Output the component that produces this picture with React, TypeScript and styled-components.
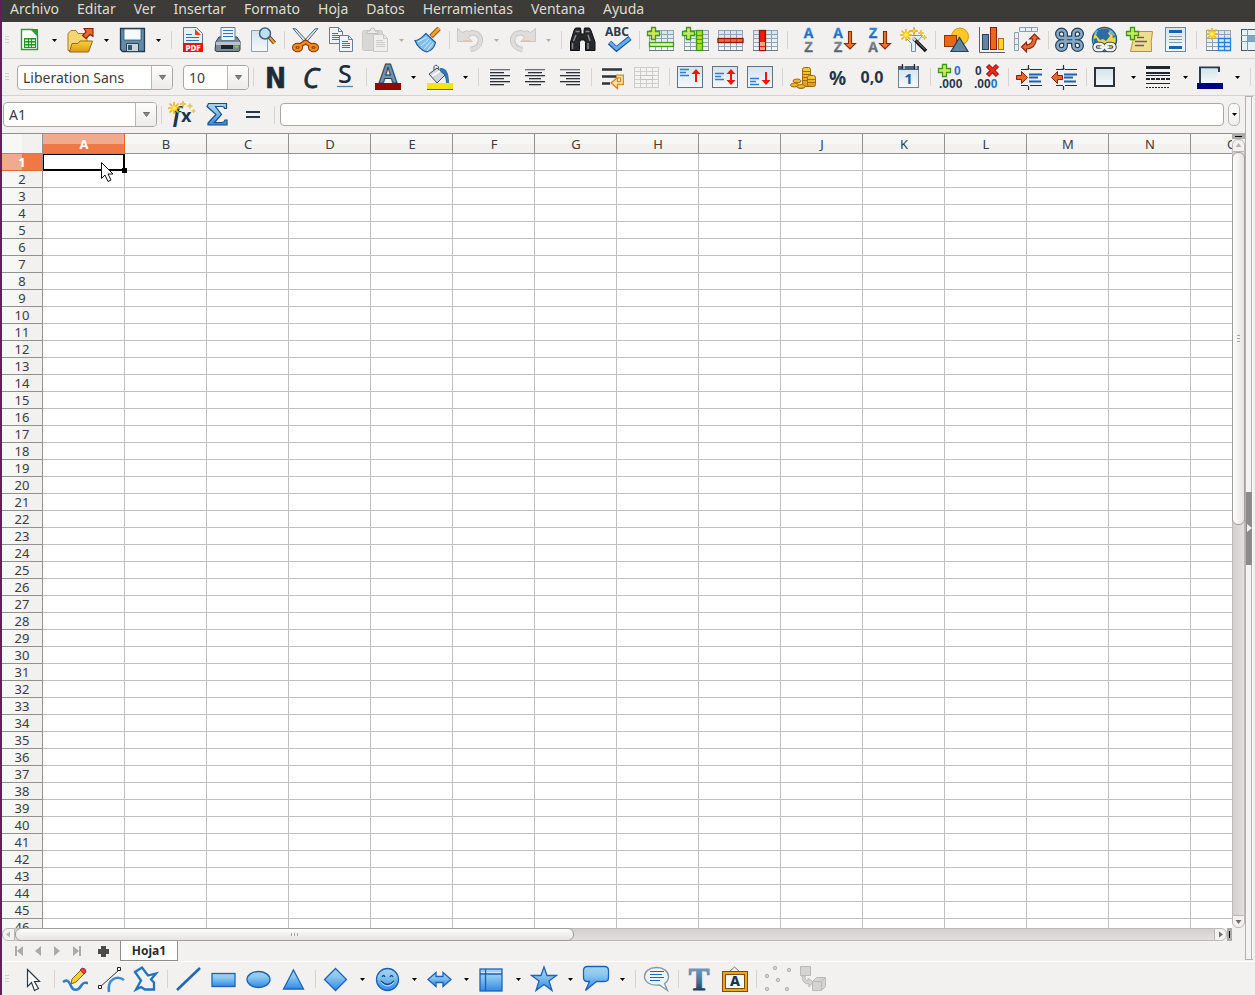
import React, { useEffect, useState } from "react";
import styled, { createGlobalStyle } from "styled-components";

const ui = '"Noto Sans", "Open Sans", sans-serif';
const chrome = "#f2f1f0";
const line = "#d6d4d2";
const ink = "#3c3c3c";

const GlobalStyle = createGlobalStyle`
  *, *::before, *::after { box-sizing: border-box; }
  body { margin: 0; background: ${chrome}; font-family: ${ui}; color: ${ink}; }
  button, input, select { font-family: inherit; color: inherit; margin: 0; }
`;

const Window = styled.div`
  display: flex;
  flex-direction: column;
  height: 100vh;
  overflow: hidden;
  border-left: 2px solid #6b1a5a;
  background: ${chrome};
`;

const MenuBar = styled.nav`
  flex: none;
  display: flex;
  gap: 18px;
  height: 22px;
  padding-left: 8px;
  background: #3c3b37;
`;

const MenuItem = styled.button`
  border: 0;
  padding: 0;
  height: 18px;
  background: none;
  color: #dfdbd2;
  font-size: 14px;
  line-height: 18px;
  white-space: nowrap;
`;

const Toolbar = styled.div<{ $last?: boolean }>`
  flex: none;
  display: flex;
  align-items: ${(p) => (p.$last ? "flex-start" : "flex-end")};
  height: ${(p) => (p.$last ? 34 : 37)}px;
  border-bottom: ${(p) => (p.$last ? "0" : `1px solid ${line}`)};
  border-top: ${(p) => (p.$last ? "1px solid #ffffff" : "0")};
`;

const Grip = styled.span<{ $wide?: number }>`
  flex: none;
  align-self: center;
  width: ${(p) => p.$wide ?? 9}px;
  height: 8px;
  padding-left: 3px;
  background: repeating-linear-gradient(#d0cecc 0 1px, transparent 1px 3px) content-box;
  border-right: ${(p) => (p.$wide ?? 9) - 7}px solid transparent;
`;

const ToolButton = styled.button`
  flex: none;
  display: flex;
  align-items: center;
  justify-content: center;
  width: 35px;
  height: 35px;
  padding: 0;
  border: 0;
  background: none;
`;

const DropButton = styled(ToolButton)`
  width: 17px;
`;

const Separator = styled.span`
  flex: none;
  align-self: center;
  width: 8px;
  height: 18px;
  border-right: 3px solid transparent;
  border-left: 4px solid transparent;
  background: ${line};
  background-clip: padding-box;
`;

const Glyph = styled.svg`
  flex: none;
  display: block;
  overflow: visible;
  font-family: ${ui};
`;

const Combo = styled.div<{ $width: number; $gap?: number }>`
  flex: none;
  align-self: center;
  display: grid;
  grid-template-columns: 1fr;
  width: ${(p) => p.$width}px;
  height: 25px;
  margin-right: ${(p) => p.$gap ?? 0}px;
  border: 1px solid #aaa6a2;
  border-radius: 4px;
  background: #fff;
  overflow: hidden;
`;

const ComboSelect = styled.select`
  grid-area: 1 / 1;
  appearance: none;
  border: 0;
  padding: 0 24px 0 5px;
  background: none;
  outline: 0;
  font-size: 14px;
`;

const ComboInput = styled.input`
  grid-area: 1 / 1;
  min-width: 0;
  border: 0;
  padding: 0 24px 0 5px;
  background: none;
  outline: 0;
  font-size: 14px;
`;

const ComboArrow = styled.span`
  grid-area: 1 / 1;
  justify-self: end;
  display: flex;
  align-items: center;
  justify-content: center;
  width: 21px;
  border-left: 1px solid #bcb8b4;
  background: linear-gradient(#fdfdfd, #ecebe9);
  pointer-events: none;
`;

const ComboButton = styled.button`
  grid-area: 1 / 1;
  justify-self: end;
  display: flex;
  align-items: center;
  justify-content: center;
  width: 21px;
  padding: 0;
  border: 0;
  border-left: 1px solid #bcb8b4;
  background: linear-gradient(#fdfdfd, #ecebe9);
`;

const Workspace = styled.main`
  flex: 1;
  min-height: 0;
  display: flex;
`;

const Document = styled.section`
  flex: 1;
  min-width: 0;
  display: flex;
  flex-direction: column;
`;

const FormulaBar = styled.div`
  flex: none;
  display: flex;
  align-items: center;
  height: 37px;
  padding: 0 5px 0 1px;
`;

const FormulaInput = styled.input`
  flex: 1;
  min-width: 0;
  height: 23px;
  margin: 0 4px 0 2px;
  padding: 0 5px;
  border: 1px solid #aaa6a2;
  border-radius: 4px;
  outline: 0;
  background: #fff;
  font-size: 14px;
`;

const ExpandButton = styled.button`
  flex: none;
  display: flex;
  align-items: center;
  justify-content: center;
  width: 12px;
  height: 23px;
  padding: 0;
  border: 1px solid #b9b5b1;
  border-radius: 5px;
  background: linear-gradient(#fff, #efeeec);
`;

const GridRow = styled.div`
  flex: 1;
  min-height: 0;
  display: flex;
`;

const GridView = styled.div`
  position: relative;
  flex: 1;
  min-width: 0;
  overflow: hidden;
  background: #fff;
`;

const Sheet = styled.table`
  width: max-content;
  table-layout: fixed;
  border-collapse: separate;
  border-spacing: 0;
  font-size: 13px;
`;

const Corner = styled.td`
  width: 41px;
  height: 21px;
  padding: 0;
  border: solid #929190;
  border-width: 1px 1px 1px 0;
  background: linear-gradient(90deg, #f7f7f6 50%, #f2f1f0 50%);
`;

const ColumnHead = styled.th<{ $on: boolean }>`
  width: 82px;
  height: 21px;
  padding: 1px 0 0 1px;
  border: solid #929190;
  border-width: 1px 1px 1px 0;
  border-right-color: ${(p) => (p.$on ? "#dd6a2f" : "#929190")};
  background: ${(p) =>
    p.$on
      ? "linear-gradient(#f0aa8c 50%, #f07746 50%)"
      : "linear-gradient(#f7f7f6 50%, #f2f1f0 50%)"};
  color: ${(p) => (p.$on ? "#fff" : ink)};
  font-weight: ${(p) => (p.$on ? 700 : 400)};
  line-height: 18px;
`;

const RowHead = styled.th<{ $on: boolean }>`
  width: 41px;
  height: 17px;
  padding: 1px 0 0;
  border: solid #929190;
  border-width: 0 1px 1px 0;
  border-bottom-color: ${(p) => (p.$on ? "#dd6a2f" : "#929190")};
  background: ${(p) =>
    p.$on
      ? "linear-gradient(90deg, #f0aa8c 50%, #f07746 50%)"
      : "linear-gradient(90deg, #f7f7f6 50%, #f2f1f0 50%)"};
  color: ${(p) => (p.$on ? "#fff" : ink)};
  font-weight: ${(p) => (p.$on ? 700 : 400)};
  line-height: 15px;
`;

const Cell = styled.td`
  position: relative;
  width: 82px;
  height: 17px;
  padding: 0;
  border: solid #c0c0c0;
  border-width: 0 1px 1px 0;
`;

const ActiveFrame = styled.span`
  position: absolute;
  z-index: 1;
  inset: 0 -1px -1px 0;
  border: 2px solid #000;
  border-width: 1px 2px 2px 1px;

  &::after {
    content: "";
    position: absolute;
    right: -4px;
    bottom: -4px;
    width: 5px;
    height: 5px;
    background: #000;
  }
`;

const Pointer = styled.svg`
  position: absolute;
  z-index: 2;
  left: 98px;
  top: 28px;
`;

const VScroll = styled.div`
  flex: none;
  display: flex;
  flex-direction: column;
  width: 13px;
`;

const HScroll = styled.div`
  flex: none;
  display: flex;
  height: 13px;
  margin-right: 13px;
`;

const SplitHandle = styled.span<{ $axis: "x" | "y" }>`
  flex: none;
  display: flex;
  align-items: center;
  justify-content: center;
  width: ${(p) => (p.$axis === "x" ? 5 : 13)}px;
  height: ${(p) => (p.$axis === "x" ? 13 : 6)}px;
  background: #adabaa;

  &::after {
    content: "";
    width: ${(p) => (p.$axis === "x" ? 1 : 7)}px;
    height: ${(p) => (p.$axis === "x" ? 7 : 1)}px;
    background: #000;
  }
`;

const ScrollButton = styled.button<{ $radius: string }>`
  flex: none;
  display: flex;
  align-items: center;
  justify-content: center;
  width: 13px;
  height: 13px;
  padding: 0;
  border: 1px solid #bab7b3;
  border-radius: ${(p) => p.$radius};
  background: #f3f2f1;
`;

const Track = styled.div<{ $axis: "x" | "y" }>`
  flex: 1;
  min-width: 0;
  min-height: 0;
  display: flex;
  flex-direction: ${(p) => (p.$axis === "x" ? "row" : "column")};
  border: solid #bdbab7;
  border-width: ${(p) => (p.$axis === "x" ? "1px 0" : "0 1px")};
  background: linear-gradient(${(p) => (p.$axis === "x" ? "180deg" : "90deg")}, #d3d1cf, #e2e0de);

  &::after {
    content: "";
    flex: 100 0 0;
  }
`;

const Thumb = styled.div<{ $axis: "x" | "y" }>`
  flex: ${(p) => (p.$axis === "x" ? 87 : 95)} 0 0;
  display: flex;
  align-items: center;
  justify-content: center;
  margin: ${(p) => (p.$axis === "x" ? "-1px 0" : "0 -1px")};
  border: 1px solid #a19d98;
  border-radius: 6px;
  background: linear-gradient(${(p) => (p.$axis === "x" ? "180deg" : "90deg")}, #fdfdfd, #e6e4e2);
`;

const Notches = styled.span<{ $axis: "x" | "y" }>`
  width: ${(p) => (p.$axis === "x" ? 7 : 3)}px;
  height: ${(p) => (p.$axis === "x" ? 3 : 7)}px;
  background: repeating-linear-gradient(
    ${(p) => (p.$axis === "x" ? "90deg" : "180deg")},
    #a8a5a2 0 1px,
    transparent 1px 3px
  );
`;

const TabBar = styled.div`
  flex: none;
  display: flex;
  align-items: flex-start;
  height: 20px;
  padding-left: 8px;
`;

const TabNav = styled.button<{ $wide?: boolean }>`
  flex: none;
  display: flex;
  align-items: center;
  justify-content: center;
  width: ${(p) => (p.$wide ? 34 : 19)}px;
  height: 20px;
  padding: 0;
  border: 0;
  background: none;
`;

const SheetTab = styled.button`
  width: 58px;
  height: 20px;
  padding: 0;
  border: 1px solid #8f8d8b;
  border-top: 0;
  background: #fff;
  color: #2c2c2c;
  font-size: 12px;
  font-weight: 700;
  line-height: 18px;
`;

const SideDeck = styled.aside`
  flex: none;
  display: flex;
  align-items: center;
  width: 8px;
  margin: 0 2px 1px 0;
  border: 1px solid #b3b1af;
  border-right: 0;
  background: linear-gradient(90deg, #f4f3f2 5px, #b3b1af 5px 6px, #fafafa 6px);
`;

const DeckHandle = styled.button`
  display: flex;
  align-items: center;
  width: 6px;
  height: 73px;
  padding: 0;
  border: 0;
  background: #8d8b89;
`;

/* ---------- drawings ---------- */

const Defs = () => (
  <svg width="0" height="0" style={{ position: "absolute" }} aria-hidden="true">
    <defs>
      <linearGradient id="sky" x1="0" y1="0" x2="0" y2="1">
        <stop offset="0" stopColor="#a3d3ec" />
        <stop offset=".35" stopColor="#8cc8ee" />
        <stop offset="1" stopColor="#3288e6" />
      </linearGradient>
      <linearGradient id="letter" x1="0" y1="0" x2="0" y2="1">
        <stop offset="0" stopColor="#2f95ee" />
        <stop offset="1" stopColor="#1b57a6" />
      </linearGradient>
      <linearGradient id="stone" x1="0" y1="0" x2="0" y2="1">
        <stop offset="0" stopColor="#8b9096" />
        <stop offset="1" stopColor="#4d555e" />
      </linearGradient>
      <linearGradient id="paper" x1="0" y1="0" x2="0" y2="1">
        <stop offset="0" stopColor="#d4e4ec" />
        <stop offset="1" stopColor="#f6f8fa" />
      </linearGradient>
      <linearGradient id="gold" x1="0" y1="0" x2="0" y2="1">
        <stop offset="0" stopColor="#f6d13c" />
        <stop offset="1" stopColor="#dd9a17" />
      </linearGradient>
      <linearGradient id="steel" x1="0" y1="0" x2="0" y2="1">
        <stop offset=".2" stopColor="#6f9aba" />
        <stop offset=".6" stopColor="#3f6a92" />
        <stop offset=".8" stopColor="#22405e" />
      </linearGradient>
    </defs>
  </svg>
);

const Plus = () => (
  <path d="M4.500 .5h4v4h4v4h-4v4h-4v-4h-4v-4h4z" fill="#cfe860" stroke="#3f9a16" strokeWidth="1.300" />
);

const Grid = ({ x, faint }: { x: number; faint?: boolean }) => (
  <g transform={`translate(${x} 3)`} stroke={faint ? "#cfcdcb" : "#8fa5b5"}>
    <rect x=".5" y=".5" width="24" height="20" fill={faint ? "#f4f3f2" : "url(#paper)"} />
    <path fill="none" d="M6.500 .5v20M12.500 .5v20M18.500 .5v20M.5 4.500h24M.5 8.500h24M.5 12.500h24M.5 16.500h24" />
    <path d="M0 20.500h25" stroke={faint ? "#cfcdcb" : "#68798a"} />
  </g>
);

const Star = ({ x, y, r }: { x: number; y: number; r: number }) => (
  <path
    transform={`translate(${x} ${y}) scale(${r / 6})`}
    d="M0-6 1.200-1.200 6 0 1.200 1.200 0 6-1.200 1.200-6 0-1.200-1.200z"
    fill="#ffd83a"
    stroke="#e0a312"
    strokeWidth="1.200"
  />
);

const Sun = ({ x, y }: { x: number; y: number }) => (
  <g transform={`translate(${x} ${y})`} stroke="#eeb211" strokeWidth="1.600">
    <path d="M0-6V6M-6 0H6M-4.500-4.500 4.500 4.500M4.500-4.500-4.500 4.500" />
    <circle r="2.500" fill="#fff07a" stroke="#ffd21f" />
  </g>
);

const Doc = ({ x, y, w, h, faint }: { x: number; y: number; w: number; h: number; faint?: boolean }) => (
  <g transform={`translate(${x} ${y})`} stroke={faint ? "#cbc9c7" : "#5f8199"} fill="none">
    <path d={`M.5 .5h${w - 5}l4 4v${h - 5}h-${w - 1}z`} fill={faint ? "#efeeed" : "#eef4f8"} />
    <path d={`M${w - 4.5} .5v4h4`} />
    <path
      stroke={faint ? "#cfcdcb" : "#2f77bd"}
      d={`M3 6.500h${w - 8}M3 8.500h${w - 6}M3 10.500h${w - 6}M3 12.500h${w - 6}`}
    />
  </g>
);

const Letters = ({ top, bottom, x }: { top: string; bottom: string; x: number }) => (
  <g fontSize="14" fontWeight="800" textAnchor="middle" fontFamily='"Liberation Sans", sans-serif'>
    <text x={x} y="11" fill="url(#letter)" stroke="url(#letter)" strokeWidth=".4">{top}</text>
    <text x={x} y="25" fill="url(#stone)" stroke="url(#stone)" strokeWidth=".4">{bottom}</text>
  </g>
);

const DownArrow = () => (
  <path d="M18.500 4.500h3v12h4L20 22l-5.500-5.500h4z" fill="#e37a2a" stroke="#8c2708" strokeWidth="1.100" />
);

const VAlign = ({ y, d }: { y: number; d: string }) => (
  <>
    <rect x=".5" y="2.500" width="25" height="21" fill="url(#paper)" stroke="#5f7385" />
    <path d={`M3 ${y + 0.5}h9M3 ${y + 3.5}h6M3 ${y + 6.5}h9`} stroke="#2a7fd4" strokeWidth="1.300" />
    <path d={d} fill="#f0150c" />
  </>
);

const Align = ({ rows }: { rows: number[][] }) => (
  <>
    {rows.map(([x, w], i) => (
      <rect key={i} x={x} y={5 + i * 3} width={w} height="1.300" fill={i < 1 ? "#6b6f77" : "#2b323b"} />
    ))}
  </>
);

const IndentLines = () => (
  <>
    <path d="M5 5.500h7l1.500-1M14 5.500h12M5 21.500h7M14 21.500h12M12.500 1v4M12.500 22v4" stroke="#26323e" strokeWidth="1.200" />
    <path d="M13 10.500h13M13 13.500h9M13 17.500h12" stroke="#1d62ad" strokeWidth="2" />
  </>
);

const red = { fill: "#e26a33", stroke: "#8a2108", strokeWidth: 1.1 };
const outline = { fill: "url(#sky)", stroke: "#1c64b8", strokeWidth: 1.3 };
const tight = '"Liberation Sans", sans-serif';

const art: Record<string, React.ReactNode> = {
  nuevo: (
    <>
      <path d="M6.500 2.500h11l5 6v14h-16z" fill="#fff" stroke="#2f9a30" strokeWidth="1.400" />
      <path d="M15 2h8v8z" fill="#25a22a" />
      <path d="M9 11h12v10H9z" fill="#23962a" />
      <path d="M10 12.500h3v1.500h-3zM14 12.500h2v1.500h-2zM17 12.500h3v1.500h-3zM10 15.500h3v1.500h-3zM14 15.500h2v1.500h-2zM17 15.500h3v1.500h-3zM10 18.500h3v1.500h-3zM14 18.500h2v1.500h-2zM17 18.500h3v1.500h-3z" fill="#d6f3c8" />
    </>
  ),
  abrir: (
    <>
      <path d="M1 23.500V6.500l3-3h5l2 3h9v17z" fill="#f4d774" stroke="#a67a24" />
      <path d="M2.500 25 5 16.500h6l2-2.500h12.500L21.500 25z" fill="url(#gold)" stroke="#9a6914" />
      <path d="M15.500 8.500 19 5l-2-3.500h9v8l-3-2-4 4z" {...red} />
    </>
  ),
  guardar: (
    <>
      <path d="M1.500 1.500h24v23h-22l-2-2z" fill="#6189a8" stroke="#223a4d" strokeWidth="1.300" />
      <path d="M5 2h17v11H5z" fill="#f7fafc" stroke="#36566f" strokeWidth=".8" />
      <path d="M7.500 16.500h12v8h-12z" fill="#c9d3d9" stroke="#2c4456" />
      <path d="M9 18h4v5H9z" fill="#35526a" />
    </>
  ),
  pdf: (
    <>
      <path d="M4.500 .5h13l6 6v18h-19z" fill="#e6eff5" stroke="#587a93" />
      <path d="M16 2v6h6z" fill="#f13a24" />
      <path d="M7 7.500h6M7 10.500h13M7 13.500h13" stroke="#2b74bb" />
      <path d="M4 16h20v9H4z" fill="#ee1108" />
      <text x="14" y="23.500" fontSize="8" fontWeight="800" textAnchor="middle" fill="#fff">PDF</text>
    </>
  ),
  imprimir: (
    <>
      <path d="M2 14.500 5 10h18l3 4.500v8q0 2-2 2H3q-2 0-2-2z" fill="#7d8b97" stroke="#2e3b46" />
      <path d="M7 .5h14v13H7z" fill="#eef5fa" stroke="#5c7f9a" />
      <path d="M9 3.500h10M9 6.500h10M9 9.500h10" stroke="#2b74bb" />
      <path d="M2 15h24v3H2z" fill="#b9c3cb" />
      <path d="M7 18h12v4H7z" fill="#1d242a" />
      <path d="M21 19h3v1.500h-3z" fill="#74e04a" />
    </>
  ),
  vista: (
    <>
      <path d="M2.500 3.500h16v21h-16z" fill="url(#paper)" stroke="#8ba1b1" />
      <path d="m20 10 5.500 6" stroke="#5c3a10" strokeWidth="4" />
      <path d="m20.500 10.500 5 5.500" stroke="#e9a52c" strokeWidth="2" />
      <circle cx="16" cy="6.500" r="5.500" fill="#bfe0f4" stroke="#3e6585" strokeWidth="1.500" />
    </>
  ),
  cortar: (
    <>
      <path d="M1 1.500 4 2l13 14-2 2zM26 1.500 23 2 10 16l2 2z" fill="#dde6ec" stroke="#4c6478" />
      <g fill="none" stroke="#8a3206" strokeWidth="4.500">
        <ellipse cx="5.500" cy="20.500" rx="3.300" ry="2.500" />
        <ellipse cx="21.500" cy="20.500" rx="3.300" ry="2.500" />
        <path d="m8 18.500 5.500-3.500L19 18.500" />
      </g>
      <g fill="none" stroke="#f08a1c" strokeWidth="2.600">
        <ellipse cx="5.500" cy="20.500" rx="3.300" ry="2.500" />
        <ellipse cx="21.500" cy="20.500" rx="3.300" ry="2.500" />
        <path d="m8 18.500 5.500-3.500L19 18.500" />
      </g>
    </>
  ),
  copiar: (
    <>
      <Doc x={2} y={0} w={14} h={17} />
      <Doc x={12} y={8} w={14} h={17} />
    </>
  ),
  pegar: (
    <>
      <rect x=".5" y="3.500" width="20" height="20" rx="2" fill="#d9d7d6" stroke="#cbc9c7" />
      <path d="M5 6.500V4h3q0-3 2.500-3T13 4h3v2.500z" fill="#eceae9" stroke="#bfbdbb" />
      <Doc x={11} y={7} w={15} h={18} faint />
    </>
  ),
  pincel: (
    <>
      <path d="m25 1.500-8 8" stroke="#8a5a12" strokeWidth="5" />
      <path d="m25.500 1-8 8" stroke="#f2a42e" strokeWidth="3" />
      <path d="M1 13.500C6 13.500 8 10 12 6.500l9.500 9c-1 5-5 8.500-9 9.500C8 24 3 19 1 13.500z" fill="#7fbdec" stroke="#1d5c9c" strokeWidth="1.200" />
      <path d="m4 15 9-5M7 19l8-7M10 22l7-8M13 24l6-8" stroke="#d6edfb" />
    </>
  ),
  deshacer: (
    <>
      <path d="M8 10.500Q13 5 17 6C26 7.500 26 20.500 13.500 22.500" fill="none" stroke="#c9c7c5" strokeWidth="5.500" />
      <path d="M.5 1.500v13h15l-5-4.500 3-4-4-2.500-4 2z" fill="#dedddc" stroke="#c9c7c5" />
      <path d="M9 9.500Q13 5 17 6C26 7.500 26 20.500 14 22.500" fill="none" stroke="#dedddc" strokeWidth="3.500" />
      <path d="M6 13.500h7" stroke="#f3c49c" />
    </>
  ),
  buscar: (
    <>
      <path d="M5 3.500 6.500 1h5L12 4v3h3V4l.5-3h5L22 3.500 26 15v8.500h-9.500v-8l-1-2.500h-4l-1 2.500v8H1.500V15z" fill="#26282b" stroke="#0d0e10" />
      <path d="M6.500 4.500h4M16.500 4.500h4M7 8 4.500 14M19 8l2 6M3.500 16v6M19 16v6" stroke="#85898e" strokeWidth="1.500" />
    </>
  ),
  ortografia: (
    <>
      <text x="13" y="9" fontSize="12" fontWeight="700" textAnchor="middle" fill="#2d3e50">ABC</text>
      <path d="m5.500 15.500 7 6.500L26 11" fill="none" stroke="#1b4f92" strokeWidth="5" />
      <path d="m6 15.500 6.500 6L25.500 11.500" fill="none" stroke="#5fb0f2" strokeWidth="3" />
    </>
  ),
  filaMas: (
    <>
      <Grid x={2} />
      <rect x="2.500" y="15.500" width="24" height="4" fill="#dcefc0" stroke="#3f9a16" strokeWidth="1.300" />
      <Plus />
    </>
  ),
  colMas: (
    <>
      <Grid x={2} />
      <rect x="14.500" y="3.500" width="6" height="20" fill="#a6e02c" stroke="#3f9a16" strokeWidth="1.300" />
      <path d="M15 8.500h5M15 12.500h5M15 16.500h5" stroke="#3f9a16" />
      <Plus />
    </>
  ),
  filaMenos: (
    <>
      <Grid x={1} />
      <rect x="1" y="11.500" width="25" height="4" fill="#ef6a3a" stroke="#991406" strokeWidth="1.300" />
      <path d="M7.500 12v3M13.500 12v3M19.500 12v3" stroke="#c23a1a" />
    </>
  ),
  colMenos: (
    <>
      <Grid x={1} />
      <rect x="7.500" y="3.500" width="6" height="20" fill="#ee1b10" stroke="#991406" strokeWidth="1.300" />
      <path d="M8 15h5v4H8zM8 20h5v3H8z" fill="#f3a385" />
    </>
  ),
  ordenar: <Letters top="A" bottom="Z" x={13.5} />,
  ascendente: (
    <>
      <Letters top="A" bottom="Z" x={8} />
      <DownArrow />
    </>
  ),
  descendente: (
    <>
      <Letters top="Z" bottom="A" x={8} />
      <DownArrow />
    </>
  ),
  filtro: (
    <>
      <path d="M3.500 8.500h19l-7 8v8h-4v-8z" fill="#e4eff6" stroke="#7892a5" />
      <path d="m13.500 11.500 12.500 12.500" stroke="#14181c" strokeWidth="3.500" />
      <path d="m12.500 10.500 3 3" stroke="#c9ced2" strokeWidth="2.500" />
      <path d="m16 13.500 9 9" stroke="#7d848a" />
      <Sun x={6} y={8} />
      <Star x={14} y={4} r={4} />
      <Star x={21} y={6} r={3} />
      <Star x={24.500} y={10.500} r={2.5} />
    </>
  ),
  formas: (
    <>
      <circle cx="17" cy="9.500" r="8.500" fill="#fbc925" stroke="#d89210" />
      <rect x="1.500" y="8.500" width="12" height="11" fill="#e8691c" stroke="#8f3606" />
      <path d="m16.500 10.500 8.500 14H8z" fill="#63869f" stroke="#24415a" strokeWidth="1.200" />
    </>
  ),
  grafico: (
    <>
      <path d="M1.500 0v25.500H27" fill="none" stroke="#5c6268" />
      <rect x="4.500" y="7.500" width="6" height="15" fill="#5f86a4" stroke="#243f56" />
      <rect x="12.500" y=".5" width="6" height="22" fill="#e8691c" stroke="#8f1a06" />
      <rect x="20.500" y="11.500" width="5" height="11" fill="#fbd525" stroke="#b36f0a" />
    </>
  ),
  dinamica: (
    <>
      <path d="M1.500 5.500h4v18h-4zM1.500 11.500h4M1.500 17.500h4M6.500 .5h18v4h-18zM12.500 .5v4M18.500 .5v4" fill="#e8f0f5" stroke="#8aa0b0" />
      <path d="M8.500 20 13.500 15v3q6-1 6-6h-3l5-5 5 5h-3q-1 9.500-10 10v3z" {...red} />
    </>
  ),
  comando: (
    <g fill="none">
      {[["#243f58", 5], ["#87a9c6", 2.6]].map(([c, w]) => (
        <path key={c} stroke={c as string} strokeWidth={w as number}
          d="M17.500 7v11.500a4 4 0 1 0 4-4H5.500a4 4 0 1 0 4 4V7a4 4 0 1 0-4 4h16a4 4 0 1 0-4-4z" />
      ))}
    </g>
  ),
  enlace: (
    <>
      <circle cx="13.500" cy="12.500" r="12" fill="#f0d640" stroke="#1d5a8c" strokeWidth="1.500" />
      <path d="M7 3q7-3 13 0l-3 3 2 3-4 5-3-2-3 1-4-5zM22 6l2.500 4-3 1zM2.500 12l3-1 2 5-4 1z" fill="#2c6ca8" />
      <path d="M3 6q2-3 4-3l-2 5zM18 3q5 2 6 6l-5-2z" fill="#5fb4ea" />
      <g fill="none" stroke="#3c4852" strokeWidth="4.500">
        <rect x="3.500" y="17" width="9" height="6" rx="3" />
        <rect x="14.500" y="17" width="9" height="6" rx="3" />
      </g>
      <g fill="none" stroke="#eef2f5" strokeWidth="2.500">
        <rect x="3.500" y="17" width="9" height="6" rx="3" />
        <rect x="14.500" y="17" width="9" height="6" rx="3" />
        <path d="M9 20h9" />
      </g>
    </>
  ),
  nota: (
    <>
      <path d="M7.500 4.500h19q-2 10-1 20H4.500q3-10 3-20z" fill="#f0dd8e" stroke="#b39532" />
      <path d="M11 10.500h7M9 14.500h12M9 18.500h9" stroke="#5b6570" strokeWidth="1.300" />
      <Plus />
    </>
  ),
  encabezado: (
    <>
      <rect x="4.500" y=".5" width="20" height="24" fill="url(#paper)" stroke="#6e8799" />
      <path d="M8 3h13v3H8zM8 19h13v3H8z" fill="#1b62b3" />
      <path d="M8 9.500h13M8 12.500h13M8 15.500h13" stroke="#8a99a5" />
    </>
  ),
  inmovilizar: (
    <>
      <Grid x={2} />
      <path d="M14.500 11.500h12v12h-12zM14.500 15.500h12M14.500 19.500h12M20.500 11.500v12" fill="#dcebf8" stroke="#2e7fd8" strokeWidth="1.300" />
      <Sun x={8} y={7} />
    </>
  ),
  dividir: (
    <>
      <rect x="2.500" y="2.500" width="24" height="21" fill="#e6f3f6" stroke="#4d565e" />
      <path d="M8.500 2v22M2 8.500h25M2 14.500h25" stroke="#7f9aab" />
      <path d="M9 9h18v5H9z" fill="#7fa6c9" />
    </>
  ),
  negrita: (
    <text x="14.500" y="24" fontSize="28" fontWeight="700" textAnchor="middle" fill="#1f2a38" stroke="#1f2a38"
      strokeWidth=".5" fontFamily='"Liberation Sans Narrow", "DejaVu Sans Condensed", sans-serif'>N</text>
  ),
  cursiva: (
    <text x="15" y="24" fontSize="28" fontStyle="italic" textAnchor="middle" fill="#1f2a38" stroke="#1f2a38"
      strokeWidth=".8" fontFamily='"Open Sans", sans-serif'>C</text>
  ),
  subrayado: (
    <>
      <text x="14" y="19" fontSize="25" fontWeight="500" textAnchor="middle" fill="#1f2a38">S</text>
      <path d="M6 22.500h16" stroke="#5b86a8" strokeWidth="1.300" />
    </>
  ),
  colorTexto: (
    <>
      <text x="14" y="19" fontSize="26" fontWeight="700" textAnchor="middle" fill="#6f93b1" stroke="#243c55">A</text>
      <path d="M1 19h26v7H1z" fill="#8f0b02" />
    </>
  ),
  relleno: (
    <>
      <path d="M14 4q9-1 9 15h-3q0-9-6-9z" fill="#2f78b8" />
      <path d="m3 10 8-6 8 7-8 8z" fill="#cdd7de" stroke="#3c4d5a" />
      <path d="M8 6V2.500Q9 .5 11 1.500t2 4" fill="none" stroke="#3c4d5a" />
      <path d="m6 12 8-5" stroke="#fff" strokeWidth="2" />
      <path d="M1 19h26v7H1z" fill="#fbe214" />
      <path d="M1 25.500h26" stroke="#d92a10" />
    </>
  ),
  izquierda: <Align rows={[[4, 20], [4, 14], [4, 20], [4, 14], [4, 20], [4, 14]]} />,
  centro: <Align rows={[[4, 20], [7, 14], [4, 20], [8, 12], [4, 20], [8, 12]]} />,
  derecha: <Align rows={[[4, 20], [10, 14], [4, 20], [10, 14], [4, 20], [10, 14]]} />,
  ajustar: (
    <>
      <path d="M3 5.500h20M3 12.500h15M3 19.500h8" stroke="#2e343b" strokeWidth="2.500" />
      <path d="M17 12.500h6v6.500h-6" fill="none" stroke="#d9861c" strokeWidth="4" />
      <path d="M18.500 13.500v11L12 19z" fill="#ffe0a0" stroke="#d9861c" strokeWidth="1.300" />
      <path d="M18 12.500h5V19h-6" fill="none" stroke="#ffe7b0" strokeWidth="1.600" />
    </>
  ),
  combinar: (
    <>
      <Grid x={0} faint />
      <path d="M6.500 11.500h12v4h-12z" fill="#f4f3f2" stroke="#c5c3c1" />
    </>
  ),
  arriba: <VAlign y={5} d="m19 5 4.500 5H20v8h-2v-8h-3.500z" />,
  medio: <VAlign y={9} d="m19 5 4.500 5H20v6h3.500L19 21l-4.500-5H18v-6h-3.500z" />,
  abajo: <VAlign y={14} d="m19 21 4.500-5H20V8h-2v8h-3.500z" />,
  moneda: (
    <g fill="url(#gold)" stroke="#a4680c">
      <rect x="12.500" y="3.500" width="8" height="19" rx="2" />
      <path d="M12.500 7.500h8M12.500 10.500h8M12.500 13.500h8M12.500 16.500h8" />
      <rect x="17.500" y="11.500" width="8" height="11" rx="2" />
      <path d="M17.500 15.500h8M17.500 18.500h8" />
      <ellipse cx="7" cy="17" rx="4" ry="2" />
      <ellipse cx="4.500" cy="21" rx="4" ry="2" />
      <ellipse cx="11" cy="22.500" rx="4" ry="2" />
    </g>
  ),
  porcentaje: <text x="12.500" y="21" fontSize="19" fontWeight="700" textAnchor="middle" fill="#24364a">%</text>,
  decimal: <text x="12" y="19" fontSize="16" fontWeight="700" textAnchor="middle" fill="#24364a">0,0</text>,
  fecha: (
    <>
      <rect x="3.500" y="2.500" width="20" height="21" fill="url(#paper)" stroke="#6d8395" />
      <path d="M3 2h21v4H3z" fill="#4a6379" />
      <path d="M7.500 0v5M19.500 0v5" stroke="#1f2c38" strokeWidth="1.500" />
      <path d="M9 0v5M21 0v5" stroke="#fff" />
      <text x="13.500" y="20" fontSize="15" fontWeight="700" textAnchor="middle" fill="#1b5fae">1</text>
    </>
  ),
  masDecimal: (
    <>
      <Plus />
      <g fontSize="12" fontWeight="700" fill="#24364a" fontFamily={tight}>
        <text x="16" y="11" fill="#1f6fd0">0</text>
        <text x="1" y="24">.000</text>
      </g>
    </>
  ),
  menosDecimal: (
    <>
      <g fontSize="12" fontWeight="700" fill="#24364a" fontFamily={tight}>
        <text x="2" y="11">0</text>
        <text x="1" y="24">.00<tspan fill="#1f6fd0">0</tspan></text>
      </g>
      <path d="m14.500 1.500 10 10M24.500 1.500l-10 10" stroke="#8f0c05" strokeWidth="4.500" />
      <path d="m15 2 9 9M24 2l-9 9" stroke="#f5281c" strokeWidth="2.500" />
    </>
  ),
  sangriaMas: (
    <>
      <IndentLines />
      <path d="M.5 11.500h5v-4l6 6-6 6v-4h-5z" fill="#e5672a" stroke="#8a2108" />
    </>
  ),
  sangriaMenos: (
    <>
      <IndentLines />
      <path d="M11.500 11.500h-5v-4l-6 6 6 6v-4h5z" fill="#e5672a" stroke="#8a2108" />
    </>
  ),
  borde: <rect x="1" y="4" width="19" height="18" fill="url(#paper)" stroke="#2b323b" strokeWidth="2" />,
  estiloLinea: (
    <path d="M0 2h24v3H0zM0 8h24v2H0zM0 11h24v1H0zM0 14h4v2H0zM5 14h4v2H5zM10 14h4v2h-4zM15 14h4v2h-4zM20 14h4v2h-4zM0 19h24v1H0zM0 23h2v1H0zM3 23h2v1H3zM6 23h2v1H6zM9 23h2v1H9zM12 23h2v1h-2zM15 23h2v1h-2zM18 23h2v1h-2zM21 23h2v1h-2z" fill="#1f2732" />
  ),
  colorBorde: (
    <>
      <path d="M2 19V3.500h19V8" fill="url(#paper)" stroke="#2b3c4b" strokeWidth="2" />
      <path d="M3 4.500h16V19H3z" fill="url(#paper)" />
      <path d="M-1 19h26v6H-1z" fill="#000082" />
    </>
  ),
  funcion: (
    <>
      <text x="4" y="21" fontSize="24" fontWeight="700" fill="#1c3352" fontFamily='"Liberation Serif", serif'>
        <tspan fontStyle="italic">f</tspan>
        <tspan fontSize="18" fontFamily={ui}>x</tspan>
      </text>
      <Sun x={5} y={7} />
      <Star x={14} y={3} r={3} />
      <Star x={21} y={5} r={2.5} />
      <Star x={24.500} y={10} r={2} />
    </>
  ),
  suma: (
    <path d="M4.500 2.500h18v5h-2q0-2-3-2h-6l6 8-7 8h7q3 0 3.500-2.500h2v5h-19v-2l8-8.500-9-8z" fill="url(#sky)" stroke="#1c4f7d" strokeWidth="1.200" />
  ),
  igual: <path d="M7 10h14v2H7zM7 15h14v2H7z" fill="#24364a" />,
  seleccion: (
    <path d="M8.500 3.500v17l4-4 3 8 4-2-4-7h5z" fill="#fdfdfd" stroke="#2c3a47" strokeWidth="1.200" />
  ),
  manoAlzada: (
    <>
      <path d="M1 16c4-3 6-1 8 4s7 5 10 0 4-3 7-3" fill="none" stroke="#2f7cc8" strokeWidth="2.600" />
      <path d="m9 18 1-5 9-9 4 3-9 9z" fill="#f7d02e" stroke="#8d6210" />
      <path d="m18 4 2-2q4 0 4 4l-2 2z" fill="#e8434a" stroke="#8d1c2c" strokeWidth=".8" />
    </>
  ),
  curva: (
    <>
      <path d="M27 14C20 9 10 13 12 26" fill="none" stroke="#3d8bd8" strokeWidth="2.600" />
      <path d="M3 21 22 4" stroke="#333" />
      <path d="M1.500 19.500h3v3h-3zM20.500 1.500h3v3h-3z" fill="#fff" stroke="#222" />
    </>
  ),
  poligono: (
    <path d="m3 6 7-4.500 6 8 8-2-5 6 3 3v7H13L9 21l-5 2.500 5-9z" fill="none" stroke="#2272c2" strokeWidth="2.300" />
  ),
  linea: <path d="M2 24 25 2" stroke="#2168b6" strokeWidth="2.600" />,
  rectangulo: <rect x="2" y="7.500" width="23" height="13" {...outline} />,
  elipse: <ellipse cx="13.500" cy="13.500" rx="11.500" ry="8" {...outline} />,
  triangulo: <path d="m13.500 4 10 19h-20z" {...outline} />,
  rombo: <path d="m12.500 2.500 11 11-11 11-11-11z" {...outline} />,
  cara: (
    <>
      <circle cx="12.500" cy="13.500" r="11" {...outline} />
      <path d="M7 11q1.500-3 3 0M15 11q1.500-3 3 0M6 15q6.500 7 13 0" fill="none" stroke="#164d8e" strokeWidth="1.300" />
      <path d="M6 16.500q6.500 7 13 0" fill="none" stroke="#c8e6f9" />
    </>
  ),
  flecha: <path d="m1 13.500 8-7v4h7v-4l8 7-8 7v-4H9v4z" {...outline} />,
  diagrama: (
    <>
      <rect x="1" y="3" width="22" height="22" {...outline} />
      <path d="M1 8h22M6.500 3v22" stroke="#1c64b8" strokeWidth="1.300" />
      <path d="M2 6.500h4M8 6.500h14" stroke="#d3ebf9" />
    </>
  ),
  estrella: <path d="m13 1 3 8.500h9.500L18 15l3 9.500-8-6-8 6L8 15 .5 9.500H10z" {...outline} />,
  llamada: <path d="M4.500 .5h17q4 0 4 4v7q0 4-4 4h-8l-11 9 4-9h-2q-4 0-4-4v-7q0-4 4-4z" {...outline} />,
  comentario: (
    <>
      <path d="M13.500 1.500c7 0 12 4 12 9 0 4-2 6-4 7l3 7-8-5.500c-9 1-15-3-15-8.500 0-5 5-9 12-9z" fill="#eef5fa" stroke="#8496a4" strokeWidth="1.300" />
      <path d="M7 5.500h14M7 8.500h12M7 11.500h14M7 14.500h10" stroke="#1d66b6" strokeWidth="1.200" />
    </>
  ),
  texto: (
    <text x="13" y="24" fontSize="31" fontWeight="700" textAnchor="middle" fill="url(#steel)" stroke="url(#steel)"
      fontFamily='"Liberation Serif", serif'>T</text>
  ),
  marco: (
    <>
      <path d="m8 6 5.500-5L19 6" fill="none" stroke="#6b7681" />
      <rect x="3" y="7" width="22" height="17" fill="#f4fafd" stroke="#7a4c0b" strokeWidth="4" />
      <rect x="3" y="7" width="22" height="17" fill="none" stroke="#eda51e" strokeWidth="2" />
      <text x="14" y="20" fontSize="14" fontWeight="800" textAnchor="middle" fill="#1f3347">A</text>
    </>
  ),
  puntos: (
    <g fill="#d4d2d0" stroke="#b3b1af">
      {[[3, 10], [11, 2], [25, 4], [14, 14], [3, 23], [23, 23]].map(([x, y]) => (
        <circle key={`${x}-${y}`} cx={x} cy={y} r="1.700" />
      ))}
    </g>
  ),
  extrusion: (
    <g fill="#d6d4d2" stroke="#bcbab8">
      <path d="M1.500 .5h10v9h-10z" />
      <path d="M3 10q0 8 7 8v3l4-5-5-4v3q-3 0-3-5z" />
      <path d="m13.500 15.500 4-4h9v9l-4 4h-9zM13.500 15.500h9v9M22.500 15.500l4-4" />
    </g>
  ),
};
art.rehacer = <g transform="translate(27 0) scale(-1 1)">{art.deshacer}</g>;

const Icon = ({ name }: { name: string }) => (
  <Glyph width="27" height="27" viewBox="0 0 27 27" aria-hidden="true">
    {art[name]}
  </Glyph>
);

const Caret = ({ off }: { off?: boolean }) => (
  <svg width="5" height="3" viewBox="0 0 5 3" aria-hidden="true">
    <path d="M0 0h5L2.500 3z" fill={off ? "#b0aeac" : "#000"} />
  </svg>
);

const BigCaret = () => (
  <svg width="7" height="5" viewBox="0 0 7 5" aria-hidden="true">
    <path d="M.5 .5h6l-3 4z" fill="#8b8986" stroke="#6f6d6a" />
  </svg>
);

const Tri = ({ dir, color = "#6f6d6a" }: { dir: number; color?: string }) => (
  <svg width="7" height="7" viewBox="0 0 7 7" aria-hidden="true">
    <path transform={`rotate(${dir} 3.500 3.500)`} d="M.5 5h6l-3-4z" fill={color} />
  </svg>
);

/* "|" is a divider, "+" marks a button with its own menu, "-" one that is disabled */
type Tool = [string, string, string?];

const standard: Tool[] = [
  ["nuevo", "Nuevo", "+"], ["abrir", "Abrir", "+"], ["guardar", "Guardar", "+"], ["|", ""],
  ["pdf", "Exportar a PDF"], ["imprimir", "Imprimir"], ["vista", "Vista previa"], ["|", ""],
  ["cortar", "Cortar"], ["copiar", "Copiar"], ["pegar", "Pegar", "-"], ["pincel", "Clonar formato"], ["|", ""],
  ["deshacer", "Deshacer", "-"], ["rehacer", "Rehacer", "-"], ["|", ""],
  ["buscar", "Buscar y reemplazar"], ["ortografia", "Ortografía"], ["|", ""],
  ["filaMas", "Insertar fila"], ["colMas", "Insertar columna"], ["filaMenos", "Eliminar fila"], ["colMenos", "Eliminar columna"], ["|", ""],
  ["ordenar", "Ordenar"], ["ascendente", "Orden ascendente"], ["descendente", "Orden descendente"], ["filtro", "Filtro automático"], ["|", ""],
  ["formas", "Imagen"], ["grafico", "Gráfico"], ["dinamica", "Tabla dinámica"], ["|", ""],
  ["comando", "Carácter especial"], ["enlace", "Hiperenlace"], ["nota", "Comentario"], ["encabezado", "Encabezado y pie"], ["|", ""],
  ["inmovilizar", "Inmovilizar"], ["dividir", "Dividir ventana"],
];

const formatting: Tool[] = [
  ["|", ""], ["negrita", "Negrita"], ["cursiva", "Cursiva"], ["subrayado", "Subrayado"], ["|", ""],
  ["colorTexto", "Color de letra", "+"], ["relleno", "Color de fondo", "+"], ["|", ""],
  ["izquierda", "Alinear a la izquierda"], ["centro", "Centrar"], ["derecha", "Alinear a la derecha"], ["|", ""],
  ["ajustar", "Ajustar texto"], ["combinar", "Combinar celdas"], ["|", ""],
  ["arriba", "Alinear arriba"], ["medio", "Centrar verticalmente"], ["abajo", "Alinear abajo"], ["|", ""],
  ["moneda", "Moneda"], ["porcentaje", "Porcentaje"], ["decimal", "Número"], ["fecha", "Fecha"], ["|", ""],
  ["masDecimal", "Añadir decimal"], ["menosDecimal", "Eliminar decimal"], ["|", ""],
  ["sangriaMas", "Aumentar sangría"], ["sangriaMenos", "Reducir sangría"], ["|", ""],
  ["borde", "Bordes", "+"], ["estiloLinea", "Estilo del borde", "+"], ["colorBorde", "Color del borde", "+"], ["|", ""],
];

const drawing: Tool[] = [
  ["seleccion", "Seleccionar"], ["|", ""],
  ["manoAlzada", "Línea a mano alzada"], ["curva", "Curva"], ["poligono", "Polígono"], ["|", ""],
  ["linea", "Línea"], ["rectangulo", "Rectángulo"], ["elipse", "Elipse"], ["triangulo", "Triángulo"], ["|", ""],
  ["rombo", "Formas básicas", "+"], ["cara", "Formas de símbolos", "+"], ["flecha", "Flechas de bloque", "+"],
  ["diagrama", "Diagramas de flujo", "+"], ["estrella", "Estrellas", "+"], ["llamada", "Llamadas", "+"], ["|", ""],
  ["comentario", "Llamada"], ["|", ""], ["texto", "Cuadro de texto"], ["marco", "Fontwork"], ["|", ""],
  ["puntos", "Puntos"], ["extrusion", "Extrusión"],
];

const Tools = ({ items }: { items: Tool[] }) => (
  <>
    {items.map(([name, label, menu], i) =>
      name === "|" ? (
        <Separator key={i} />
      ) : (
        <React.Fragment key={i}>
          <ToolButton type="button" aria-label={label}>
            <Icon name={name} />
          </ToolButton>
          {menu && (
            <DropButton type="button" aria-label={`Opciones: ${label}`}>
              <Caret off={menu === "-"} />
            </DropButton>
          )}
        </React.Fragment>
      ),
    )}
  </>
);

const menus = ["Archivo", "Editar", "Ver", "Insertar", "Formato", "Hoja", "Datos", "Herramientas", "Ventana", "Ayuda"];

const useVisibleCells = () => {
  const measure = () => ({
    cols: Math.min(26, Math.max(1, Math.ceil((window.innerWidth - 66) / 82))),
    rows: Math.max(1, Math.ceil((window.innerHeight - 221) / 17)),
  });
  const [size, setSize] = useState(measure);
  useEffect(() => {
    const update = () => setSize(measure());
    window.addEventListener("resize", update);
    return () => window.removeEventListener("resize", update);
  }, []);
  return size;
};

const Spreadsheet = () => {
  const { cols, rows } = useVisibleCells();
  const letters = Array.from({ length: cols }, (_, i) => String.fromCharCode(65 + i));
  return (
    <Sheet>
      <thead>
        <tr>
          <Corner />
          {letters.map((l, i) => (
            <ColumnHead key={l} $on={i === 0} scope="col">{l}</ColumnHead>
          ))}
        </tr>
      </thead>
      <tbody>
        {Array.from({ length: rows }, (_, r) => (
          <tr key={r}>
            <RowHead $on={r === 0} scope="row">{r + 1}</RowHead>
            {letters.map((l, c) => (
              <Cell key={l}>{r === 0 && c === 0 && <ActiveFrame />}</Cell>
            ))}
          </tr>
        ))}
      </tbody>
    </Sheet>
  );
};

export default function App() {
  return (
    <Window>
      <GlobalStyle />
      <Defs />
      <MenuBar>
        {menus.map((m) => (
          <MenuItem key={m} type="button">{m}</MenuItem>
        ))}
      </MenuBar>
      <Toolbar>
        <Grip />
        <Tools items={standard} />
      </Toolbar>
      <Toolbar>
        <Grip $wide={15} />
        <Combo $width={156} $gap={10}>
          <ComboSelect aria-label="Nombre de letra" defaultValue="Liberation Sans">
            <option>Liberation Sans</option>
          </ComboSelect>
          <ComboArrow><BigCaret /></ComboArrow>
        </Combo>
        <Combo $width={66}>
          <ComboSelect aria-label="Tamaño de letra" defaultValue="10">
            <option>10</option>
          </ComboSelect>
          <ComboArrow><BigCaret /></ComboArrow>
        </Combo>
        <Tools items={formatting} />
      </Toolbar>
      <Workspace>
        <Document>
          <FormulaBar>
            <Combo $width={154}>
              <ComboInput aria-label="Cuadro de nombre" defaultValue="A1" />
              <ComboButton type="button" aria-label="Nombres definidos"><BigCaret /></ComboButton>
            </Combo>
            <Separator />
            <ToolButton type="button" aria-label="Asistente de funciones"><Icon name="funcion" /></ToolButton>
            <ToolButton type="button" aria-label="Suma"><Icon name="suma" /></ToolButton>
            <ToolButton type="button" aria-label="Función"><Icon name="igual" /></ToolButton>
            <Separator />
            <FormulaInput aria-label="Línea de entrada" />
            <ExpandButton type="button" aria-label="Expandir barra de fórmulas"><Caret /></ExpandButton>
          </FormulaBar>
          <GridRow>
            <GridView>
              <Spreadsheet />
              <Pointer width="14" height="22" viewBox="0 0 14 22" aria-hidden="true">
                <path d="M1.500 1.500v16l3.500-3.500 3 6.500 3-1.500-3-6h5z" fill="#fff" stroke="#111" />
              </Pointer>
            </GridView>
            <VScroll>
              <SplitHandle $axis="y" />
              <ScrollButton type="button" $radius="6px 6px 0 0" aria-label="Subir"><Tri dir={0} color="#b5b2af" /></ScrollButton>
              <Track $axis="y">
                <Thumb $axis="y"><Notches $axis="y" /></Thumb>
              </Track>
              <ScrollButton type="button" $radius="0 0 6px 6px" aria-label="Bajar"><Tri dir={180} /></ScrollButton>
            </VScroll>
          </GridRow>
          <HScroll>
            <ScrollButton type="button" $radius="6px 0 0 6px" aria-label="Izquierda"><Tri dir={270} color="#b5b2af" /></ScrollButton>
            <Track $axis="x">
              <Thumb $axis="x"><Notches $axis="x" /></Thumb>
            </Track>
            <ScrollButton type="button" $radius="0 6px 6px 0" aria-label="Derecha"><Tri dir={90} /></ScrollButton>
            <SplitHandle $axis="x" />
          </HScroll>
          <TabBar>
            {[
              ["Primera hoja", "M0 0h2v10H0zM8 0v10L2 5z"],
              ["Hoja anterior", "M7 0v10L1 5z"],
              ["Hoja siguiente", "M1 0v10l6-5z"],
              ["Última hoja", "M7 0h2v10H7zM1 0v10l6-5z"],
            ].map(([label, d]) => (
              <TabNav key={label} type="button" aria-label={label}>
                <svg width="9" height="10" viewBox="0 0 9 10" aria-hidden="true"><path d={d} fill="#acaaa8" /></svg>
              </TabNav>
            ))}
            <TabNav $wide type="button" aria-label="Añadir hoja">
              <svg width="11" height="11" viewBox="0 0 11 11" aria-hidden="true">
                <path d="M3 0h5v3h3v5H8v3H3V8H0V3h3z" fill="#4b4b4b" />
              </svg>
            </TabNav>
            <SheetTab type="button">Hoja1</SheetTab>
          </TabBar>
        </Document>
        <SideDeck>
          <DeckHandle type="button" aria-label="Mostrar barra lateral">
            <svg width="6" height="8" viewBox="0 0 6 8" aria-hidden="true"><path d="M1 0v8l5-4z" fill="#f2f1f0" /></svg>
          </DeckHandle>
        </SideDeck>
      </Workspace>
      <Toolbar $last>
        <Grip $wide={13} />
        <Tools items={drawing} />
      </Toolbar>
    </Window>
  );
}
